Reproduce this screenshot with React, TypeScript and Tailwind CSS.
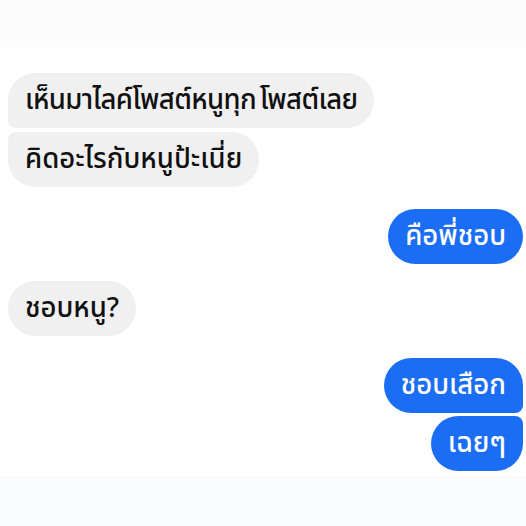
import React from "react";

type Msg = {
  text: string;
  mine: boolean;
  className: string;
};

const font = {
  fontFamily: '"Noto Sans Thai", "Noto Sans", "DejaVu Sans", sans-serif',
};

const messages: Msg[] = [
  {
    text: "เห็นมาไลค์โพสต์หนูทุก โพสต์เลย",
    mine: false,
    className:
      "mt-[26px] rounded-[28px] rounded-bl-[8px] pr-[15px] tracking-[-0.6px] [word-spacing:-3px]",
  },
  {
    text: "คิดอะไรกับหนูป้ะเนี่ย",
    mine: false,
    className: "mt-[4px] rounded-[28px] rounded-tl-[8px]",
  },
  {
    text: "คือพี่ชอบ",
    mine: true,
    className: "mt-[22px] rounded-[28px]",
  },
  {
    text: "ชอบหนู?",
    mine: false,
    className: "mt-[17px] rounded-[28px]",
  },
  {
    text: "ชอบเสือก",
    mine: true,
    className: "mt-[22px] rounded-[28px] rounded-br-[8px]",
  },
  {
    text: "เฉยๆ",
    mine: true,
    className: "mt-[3px] rounded-[28px] rounded-tr-[8px]",
  },
];

export default function App() {
  return (
    <div className="flex h-[526px] w-[526px] flex-col overflow-hidden bg-white" style={font}>
      <div className="h-[47px] shrink-0 bg-[#fcfcfc]" />
      <div className="flex flex-1 flex-col px-[8px] pr-[3px]">
        {messages.map((m, i) => (
          <div
            key={i}
            className={`flex h-[55px] shrink-0 items-center pl-[17px] text-[27.5px] font-medium leading-none ${
              m.mine
                ? "self-end bg-[#1b6ef3] pr-[17px] text-white"
                : "self-start bg-[#f0f0f0] pr-[17px] text-[#111]"
            } ${m.className}`}
          >
            {m.text}
          </div>
        ))}
      </div>
      <div className="h-[50px] shrink-0 bg-[#fafbfd]" />
    </div>
  );
}
